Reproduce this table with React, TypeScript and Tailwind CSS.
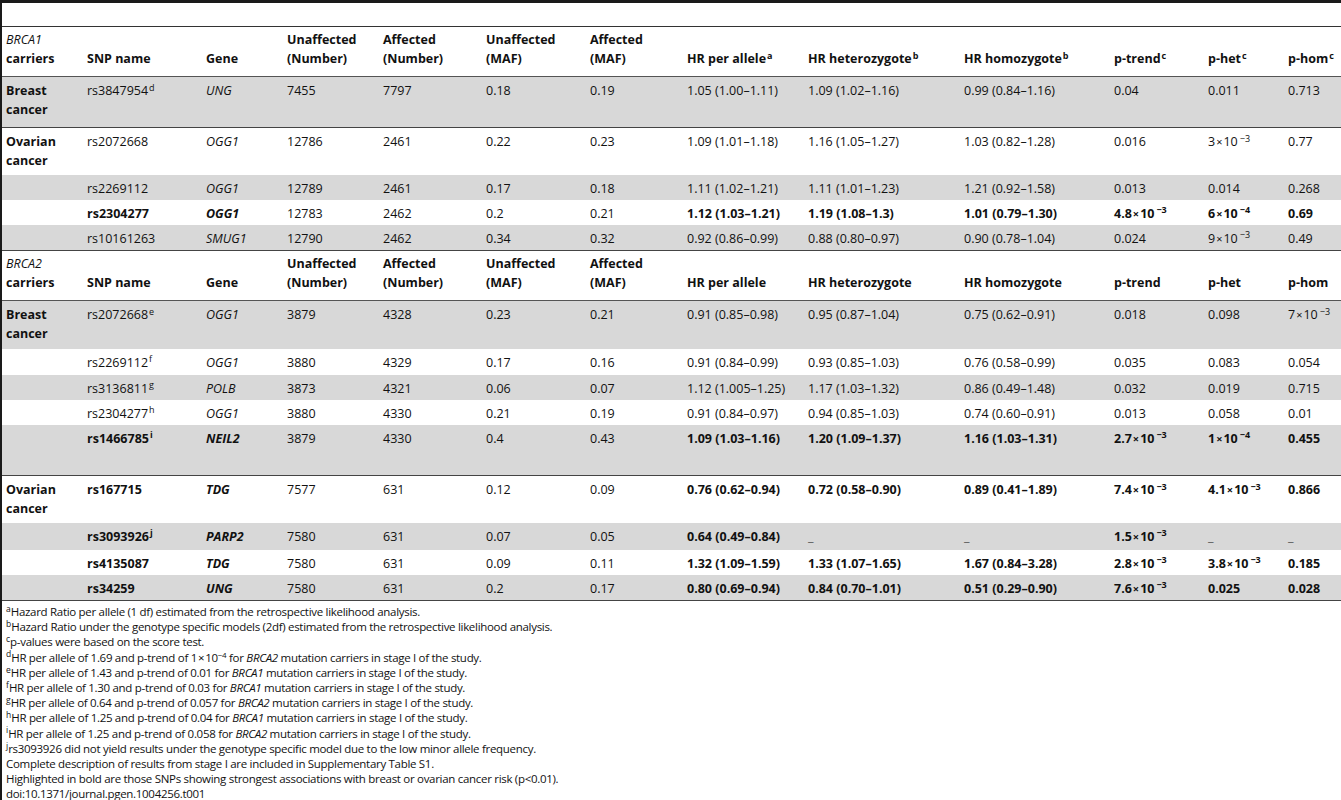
import React from "react";

type P = string | [string, string];

type Row = {
  label?: string;
  snp: string;
  sup?: string;
  bold?: boolean;
  gene: string;
  un: string;
  af: string;
  umaf: string;
  amaf: string;
  hr: string;
  het: string;
  hom: string;
  pt: P;
  ph: P;
  pm: P;
  gray?: boolean;
  h: string;
  line?: boolean;
};

const brca1: Row[] = [
  { label: "Breast cancer", snp: "rs3847954", sup: "d", gene: "UNG", un: "7455", af: "7797", umaf: "0.18", amaf: "0.19", hr: "1.05 (1.00–1.11)", het: "1.09 (1.02–1.16)", hom: "0.99 (0.84–1.16)", pt: "0.04", ph: "0.011", pm: "0.713", gray: true, h: "h-[51px]", line: true },
  { label: "Ovarian cancer", snp: "rs2072668", gene: "OGG1", un: "12786", af: "2461", umaf: "0.22", amaf: "0.23", hr: "1.09 (1.01–1.18)", het: "1.16 (1.05–1.27)", hom: "1.03 (0.82–1.28)", pt: "0.016", ph: ["3", "−3"], pm: "0.77", h: "h-[47px]" },
  { snp: "rs2269112", gene: "OGG1", un: "12789", af: "2461", umaf: "0.17", amaf: "0.18", hr: "1.11 (1.02–1.21)", het: "1.11 (1.01–1.23)", hom: "1.21 (0.92–1.58)", pt: "0.013", ph: "0.014", pm: "0.268", gray: true, h: "h-[25px]" },
  { snp: "rs2304277", bold: true, gene: "OGG1", un: "12783", af: "2462", umaf: "0.2", amaf: "0.21", hr: "1.12 (1.03–1.21)", het: "1.19 (1.08–1.3)", hom: "1.01 (0.79–1.30)", pt: ["4.8", "−3"], ph: ["6", "−4"], pm: "0.69", h: "h-[25px]" },
  { snp: "rs10161263", gene: "SMUG1", un: "12790", af: "2462", umaf: "0.34", amaf: "0.32", hr: "0.92 (0.86–0.99)", het: "0.88 (0.80–0.97)", hom: "0.90 (0.78–1.04)", pt: "0.024", ph: ["9", "−3"], pm: "0.49", gray: true, h: "h-[26px]", line: true },
];

const brca2: Row[] = [
  { label: "Breast cancer", snp: "rs2072668", sup: "e", gene: "OGG1", un: "3879", af: "4328", umaf: "0.23", amaf: "0.21", hr: "0.91 (0.85–0.98)", het: "0.95 (0.87–1.04)", hom: "0.75 (0.62–0.91)", pt: "0.018", ph: "0.098", pm: ["7", "−3"], gray: true, h: "h-[48px]" },
  { snp: "rs2269112", sup: "f", gene: "OGG1", un: "3880", af: "4329", umaf: "0.17", amaf: "0.16", hr: "0.91 (0.84–0.99)", het: "0.93 (0.85–1.03)", hom: "0.76 (0.58–0.99)", pt: "0.035", ph: "0.083", pm: "0.054", h: "h-[26px]" },
  { snp: "rs3136811", sup: "g", gene: "POLB", un: "3873", af: "4321", umaf: "0.06", amaf: "0.07", hr: "1.12 (1.005–1.25)", het: "1.17 (1.03–1.32)", hom: "0.86 (0.49–1.48)", pt: "0.032", ph: "0.019", pm: "0.715", gray: true, h: "h-[25px]" },
  { snp: "rs2304277", sup: "h", gene: "OGG1", un: "3880", af: "4330", umaf: "0.21", amaf: "0.19", hr: "0.91 (0.84–0.97)", het: "0.94 (0.85–1.03)", hom: "0.74 (0.60–0.91)", pt: "0.013", ph: "0.058", pm: "0.01", h: "h-[25px]" },
  { snp: "rs1466785", sup: "i", bold: true, gene: "NEIL2", un: "3879", af: "4330", umaf: "0.4", amaf: "0.43", hr: "1.09 (1.03–1.16)", het: "1.20 (1.09–1.37)", hom: "1.16 (1.03–1.31)", pt: ["2.7", "−3"], ph: ["1", "−4"], pm: "0.455", gray: true, h: "h-[51px]", line: true },
  { label: "Ovarian cancer", snp: "rs167715", bold: true, gene: "TDG", un: "7577", af: "631", umaf: "0.12", amaf: "0.09", hr: "0.76 (0.62–0.94)", het: "0.72 (0.58–0.90)", hom: "0.89 (0.41–1.89)", pt: ["7.4", "−3"], ph: ["4.1", "−3"], pm: "0.866", h: "h-[47px]" },
  { snp: "rs3093926", sup: "j", bold: true, gene: "PARP2", un: "7580", af: "631", umaf: "0.07", amaf: "0.05", hr: "0.64 (0.49–0.84)", het: "_", hom: "_", pt: ["1.5", "−3"], ph: "_", pm: "_", gray: true, h: "h-[27px]" },
  { snp: "rs4135087", bold: true, gene: "TDG", un: "7580", af: "631", umaf: "0.09", amaf: "0.11", hr: "1.32 (1.09–1.59)", het: "1.33 (1.07–1.65)", hom: "1.67 (0.84–3.28)", pt: ["2.8", "−3"], ph: ["3.8", "−3"], pm: "0.185", h: "h-[25px]" },
  { snp: "rs34259", bold: true, gene: "UNG", un: "7580", af: "631", umaf: "0.2", amaf: "0.17", hr: "0.80 (0.69–0.94)", het: "0.84 (0.70–1.01)", hom: "0.51 (0.29–0.90)", pt: ["7.6", "−3"], ph: "0.025", pm: "0.028", gray: true, h: "h-[26px]", line: true },
];

const widths = ["w-[81px]", "w-[119px]", "w-[81px]", "w-[96px]", "w-[103px]", "w-[104px]", "w-[97px]", "w-[121px]", "w-[156px]", "w-[150px]", "w-[94px]", "w-[80px]", "w-[57px]"];

const Sup = ({ children }: { children: React.ReactNode }) => (
  <sup className="text-[9px] ml-[1px]">{children}</sup>
);

const PVal = ({ v }: { v: P }) => {
  if (typeof v === "string") return <>{v}</>;
  return (
    <>
      {v[0]}
      <span className="text-[11px] mx-[1px]">×</span>10
      <sup className="text-[9px] ml-[2px]">{v[1]}</sup>
    </>
  );
};

const Dash = ({ v, bold }: { v: string; bold?: boolean }) =>
  v === "_" ? <span className="font-normal text-[#555]">_</span> : <span className={bold ? "font-bold" : ""}>{v}</span>;

const Td = ({ children, className = "" }: { children?: React.ReactNode; className?: string }) => (
  <td className={`px-1 pt-[4px] align-top ${className}`}>{children}</td>
);

function Header({ carrier, first }: { carrier: string; first?: boolean }) {
  const th = "px-1 pb-[8px] align-bottom text-left font-bold";
  return (
    <tr className="h-[50px] border-b border-[#555]">
      <th className={th}>
        <span className="italic font-normal">{carrier}</span>
        <br />
        carriers
      </th>
      <th className={th}>SNP name</th>
      <th className={th}>Gene</th>
      <th className={th}>Unaffected<br />(Number)</th>
      <th className={th}>Affected<br />(Number)</th>
      <th className={th}>Unaffected<br />(MAF)</th>
      <th className={th}>Affected<br />(MAF)</th>
      <th className={th}>HR per allele{first && <Sup>a</Sup>}</th>
      <th className={th}>HR heterozygote{first && <Sup>b</Sup>}</th>
      <th className={th}>HR homozygote{first && <Sup>b</Sup>}</th>
      <th className={th}>p-trend{first && <Sup>c</Sup>}</th>
      <th className={th}>p-het{first && <Sup>c</Sup>}</th>
      <th className={th}>p-hom{first && <Sup>c</Sup>}</th>
    </tr>
  );
}

function DataRow({ r }: { r: Row }) {
  const b = r.bold ? "font-bold" : "";
  return (
    <tr className={`${r.h} ${r.gray ? "bg-[#d8d8d8]" : "bg-white"} ${r.line ? "border-b border-[#444]" : ""}`}>
      <Td className="font-bold">
        {r.label && (
          <>
            {r.label.split(" ")[0]}
            <br />
            {r.label.split(" ")[1]}
          </>
        )}
      </Td>
      <Td className={b}>
        {r.snp}
        {r.sup && <sup className="text-[9px] ml-[1px]">{r.sup}</sup>}
      </Td>
      <Td className={`italic ${b}`}>{r.gene}</Td>
      <Td>{r.un}</Td>
      <Td>{r.af}</Td>
      <Td>{r.umaf}</Td>
      <Td>{r.amaf}</Td>
      <Td className={b}>{r.hr}</Td>
      <Td><Dash v={r.het} bold={r.bold} /></Td>
      <Td><Dash v={r.hom} bold={r.bold} /></Td>
      <Td className={b}><PVal v={r.pt} /></Td>
      <Td className={b}>{r.ph === "_" ? <Dash v="_" /> : <PVal v={r.ph} />}</Td>
      <Td className={b}>{r.pm === "_" ? <Dash v="_" /> : <PVal v={r.pm} />}</Td>
    </tr>
  );
}

const notes: [string, React.ReactNode][] = [
  ["a", "Hazard Ratio per allele (1 df) estimated from the retrospective likelihood analysis."],
  ["b", "Hazard Ratio under the genotype specific models (2df) estimated from the retrospective likelihood analysis."],
  ["c", "p-values were based on the score test."],
  ["d", <>HR per allele of 1.69 and p-trend of 1<span className="mx-[1px]">×</span>10<sup className="text-[8px]">−4</sup> for <i>BRCA2</i> mutation carriers in stage I of the study.</>],
  ["e", <>HR per allele of 1.43 and p-trend of 0.01 for <i>BRCA1</i> mutation carriers in stage I of the study.</>],
  ["f", <>HR per allele of 1.30 and p-trend of 0.03 for <i>BRCA1</i> mutation carriers in stage I of the study.</>],
  ["g", <>HR per allele of 0.64 and p-trend of 0.057 for <i>BRCA2</i> mutation carriers in stage I of the study.</>],
  ["h", <>HR per allele of 1.25 and p-trend of 0.04 for <i>BRCA1</i> mutation carriers in stage I of the study.</>],
  ["i", <>HR per allele of 1.25 and p-trend of 0.058 for <i>BRCA2</i> mutation carriers in stage I of the study.</>],
  ["j", "rs3093926 did not yield results under the genotype specific model due to the low minor allele frequency."],
  ["", "Complete description of results from stage I are included in Supplementary Table S1."],
  ["", "Highlighted in bold are those SNPs showing strongest associations with breast or ovarian cancer risk (p<0.01)."],
  ["", "doi:10.1371/journal.pgen.1004256.t001"],
];

export default function App() {
  return (
    <div className="w-[1341px] h-[800px] overflow-hidden bg-white border-l-2 border-[#1a1a1a] text-[#111] font-['Open_Sans',sans-serif]">
      <div className="h-[3px] bg-[#1a1a1a]" />
      <div className="h-[23px]" />
      <table className="table-fixed border-collapse w-[1339px] text-[12.5px] leading-[19px] border-t border-[#333]">
        <colgroup>
          {widths.map((w, i) => (
            <col key={i} className={w} />
          ))}
        </colgroup>
        <tbody>
          <Header carrier="BRCA1" first />
          {brca1.map((r, i) => (
            <DataRow key={"a" + i} r={r} />
          ))}
          <Header carrier="BRCA2" />
          {brca2.map((r, i) => (
            <DataRow key={"b" + i} r={r} />
          ))}
        </tbody>
      </table>
      <div className="pl-1 pt-[3px] text-[11.5px] leading-[15.2px] tracking-[-0.3px]">
        {notes.map(([s, t], i) => (
          <div key={i}>
            {s && <sup className="text-[8.5px] tracking-normal">{s}</sup>}
            {t}
          </div>
        ))}
      </div>
    </div>
  );
}
